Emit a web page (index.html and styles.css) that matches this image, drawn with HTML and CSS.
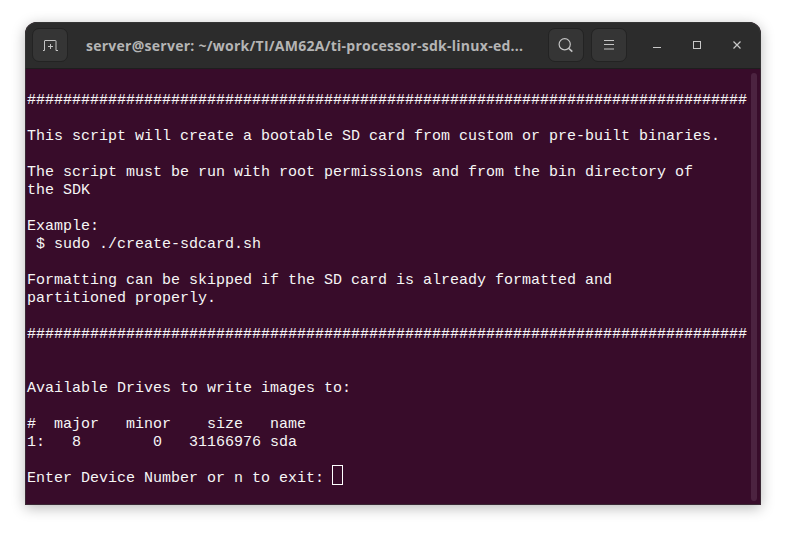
FILE: index.html
```html
<!DOCTYPE html>
<html lang="en">
<head>
<meta charset="utf-8">
<title>Terminal</title>
<link rel="stylesheet" href="styles.css">
</head>
<body>
<div class="window">
  <header class="titlebar">
    <button class="btn new-tab" aria-label="New tab">
      <svg width="16" height="12" viewBox="0 0 16 12" fill="none" stroke="#c4c4c4" stroke-width="1"><path d="M1 11.500h1.500V2q0-.5.500-.5h10.500q.5 0 .5.500v9.500H16"/><path d="M8.500 5v5M6 7.500h5"/></svg>
    </button>
    <div class="title">server@server: ~/work/TI/AM62A/ti-processor-sdk-linux-ed...</div>
    <button class="btn" aria-label="Search">
      <svg width="16" height="16" viewBox="0 0 16 16" fill="none" stroke="#c4c4c4" stroke-width="1.200"><circle cx="6.700" cy="7.300" r="5.600"/><path d="M11 11.700l3.300 2.900" stroke-width="1.600"/></svg>
    </button>
    <button class="btn" aria-label="Menu">
      <svg width="10" height="12" viewBox="0 0 10 12" stroke="#c4c4c4" stroke-width="1"><path d="M0 1.500h10M0 5.500h10M0 10h10"/></svg>
    </button>
    <div class="controls">
      <svg class="ctl" width="8" height="10" viewBox="0 0 8 10" stroke="#c8c8c8" stroke-width="1"><path d="M0 7.500h8"/></svg>
      <svg class="ctl" width="8" height="10" viewBox="0 0 8 10" fill="none" stroke="#c8c8c8" stroke-width="1"><rect x=".5" y="1.500" width="7" height="7"/></svg>
      <svg class="ctl" width="8" height="10" viewBox="0 0 8 10" stroke="#c8c8c8" stroke-width="1.200"><path d="M.5 1.500l7 7M7.500 1.500l-7 7"/></svg>
    </div>
  </header>
  <main class="terminal">
<pre class="output">

################################################################################

This script will create a bootable SD card from custom or pre-built binaries.

The script must be run with root permissions and from the bin directory of
the SDK

Example:
 $ sudo ./create-sdcard.sh

Formatting can be skipped if the SD card is already formatted and
partitioned properly.

################################################################################


Available Drives to write images to:

#  major   minor    size   name
1:   8        0   31166976 sda

Enter Device Number or n to exit: <span class="cursor"></span></pre>
    <div class="scrollbar"></div>
  </main>
</div>
</body>
</html>
```
FILE: styles.css
```css
html, body {
  margin: 0;
  height: 100%;
  background: #ffffff;
}
body {
  padding: 22px 25px 0;
  box-sizing: border-box;
  width: 786px;
  height: 533px;
  overflow: hidden;
}
.window {
  width: 736px;
  height: 483px;
  display: flex;
  flex-direction: column;
  border-radius: 12px 12px 0 0;
  overflow: hidden;
  background: #380c2a;
  box-shadow: 0 3px 14px rgba(0, 0, 0, 0.28);
  outline: 1px solid rgba(60, 60, 60, 0.6);
  outline-offset: -1px;
}
.titlebar {
  flex: 0 0 47px;
  display: flex;
  align-items: center;
  padding: 0 6px 0 7px;
  gap: 7px;
  background: #2c2c2c;
  border-bottom: 1px solid #1e1e1e;
  box-sizing: border-box;
  height: 47px;
}
.btn {
  flex: 0 0 36px;
  width: 36px;
  height: 34px;
  padding: 0;
  display: flex;
  align-items: center;
  justify-content: center;
  background: #353535;
  border: 1px solid #232323;
  border-radius: 7px;
}
.new-tab {
  margin-right: 11px;
}
.title {
  flex: 1;
  min-width: 0;
  color: #b5b5b5;
  font: bold 14px "Open Sans", "Noto Sans", sans-serif;
  letter-spacing: 0.26px;
  white-space: nowrap;
  overflow: hidden;
}
.controls {
  display: flex;
  align-items: center;
  gap: 32px;
  padding: 0 14px 0 19px;
}
.ctl {
  display: block;
}
.terminal {
  flex: 1;
  display: flex;
  justify-content: space-between;
  padding: 4px 4px 4px 2px;
  min-height: 0;
}
.output {
  margin: 0;
  padding-top: 1px;
  color: #f6f6f6;
  font: 15px/18px "Liberation Mono", monospace;
}
.cursor {
  display: inline-block;
  box-sizing: border-box;
  width: 11px;
  height: 20px;
  margin: -5px 0 -3px -1px;
  border: 1px solid #ffffff;
}
.scrollbar {
  width: 6px;
  background: #4c2340;
  border-radius: 3px;
}
```
